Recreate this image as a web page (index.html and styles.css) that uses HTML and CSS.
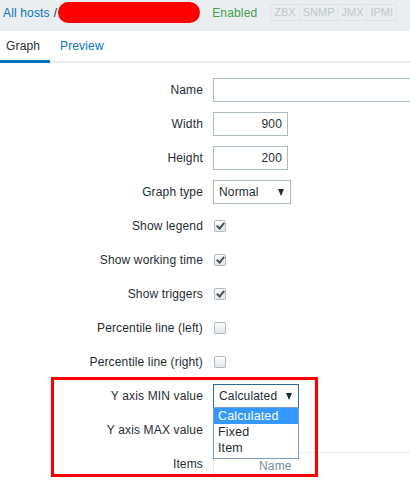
FILE: index.html
```html
<!DOCTYPE html>
<html lang="en">
<head>
  <meta charset="UTF-8" />
  <title>Graph</title>
  <link rel="stylesheet" href="styles.css">
</head>
<body>
  <header class="host-bar">
    <a class="link" href="#">All hosts</a>
    <span class="sep">/</span>
    <span class="host-name"></span>
    <span class="status-ok">Enabled</span>
    <span class="avail">
      <span class="tag">ZBX</span><span class="tag">SNMP</span><span class="tag">JMX</span><span class="tag">IPMI</span>
    </span>
  </header>

  <nav class="tabs">
    <span class="tab active">Graph</span>
    <a class="tab link" href="#">Preview</a>
  </nav>

  <form class="form-list">
    <div class="row">
      <label>Name</label>
      <input class="text wide" type="text">
    </div>
    <div class="row">
      <label>Width</label>
      <input class="text num" type="text" value="900">
    </div>
    <div class="row">
      <label>Height</label>
      <input class="text num" type="text" value="200">
    </div>
    <div class="row">
      <label>Graph type</label>
      <div class="select type-select"><span>Normal</span><i class="arrow"></i></div>
    </div>
    <div class="row">
      <label>Show legend</label>
      <span class="check on"></span>
    </div>
    <div class="row">
      <label>Show working time</label>
      <span class="check on"></span>
    </div>
    <div class="row">
      <label>Show triggers</label>
      <span class="check on"></span>
    </div>
    <div class="row">
      <label>Percentile line (left)</label>
      <span class="check"></span>
    </div>
    <div class="row">
      <label>Percentile line (right)</label>
      <span class="check"></span>
    </div>
    <div class="row">
      <label>Y axis MIN value</label>
      <div class="select-wrap">
        <div class="select focused"><span>Calculated</span><i class="arrow"></i></div>
        <ul class="options">
          <li class="picked">Calculated</li>
          <li>Fixed</li>
          <li>Item</li>
        </ul>
      </div>
    </div>
    <div class="row">
      <label>Y axis MAX value</label>
      <span></span>
    </div>
    <div class="row">
      <label>Items</label>
      <div class="items-table">
        <span class="th">Name</span>
      </div>
    </div>
  </form>

  <div class="callout"></div>
</body>
</html>
```

FILE: styles.css
```css
body {
  margin: 0;
  font-family: "Liberation Sans", Arial, sans-serif;
  font-size: 12px;
  letter-spacing: 0.15px;
  color: #1f2c33;
  background: #fff;
  overflow: hidden;
  position: relative;
  height: 480px;
}

.link {
  color: #0275b8;
  text-decoration: none;
}

/* host header */
.host-bar {
  display: flex;
  align-items: center;
  height: 21px;
  padding: 2px 0 8px 3px;
  background: #ebeef0;
}

.sep {
  margin-left: 4px;
  color: #1f2c33;
}

.host-name {
  width: 142px;
  height: 21px;
  margin-left: 1px;
  border-radius: 11px;
  background: #ff0000;
}

.status-ok {
  margin-left: 12px;
  color: #429e47;
}

.avail {
  display: flex;
  margin-left: 13px;
  border: 1px solid #dfe4e7;
  border-radius: 2px;
}

.tag {
  padding: 1px 3px;
  font-size: 11px;
  line-height: 13px;
  letter-spacing: 0;
  color: #bcc6cb;
  border-left: 1px solid #dfe4e7;
}

.tag:first-child {
  border-left: none;
}

/* tabs */
.tabs {
  display: flex;
  height: 30px;
  border-bottom: 2px solid #ebeef0;
}

.tab {
  padding: 0 6px;
  line-height: 31px;
}

.tab.active {
  width: 38px;
  border-bottom: 3px solid #0275b8;
  margin-bottom: -2px;
}

.tab.link {
  padding-left: 10px;
}

/* form */
.form-list {
  padding-top: 15px;
}

.row {
  display: grid;
  grid-template-columns: 203px 1fr;
  column-gap: 10px;
  align-items: center;
  min-height: 24px;
  margin-bottom: 10px;
}

.row label {
  text-align: right;
}

.text {
  box-sizing: border-box;
  height: 24px;
  padding: 0 5px;
  border: 1px solid #acbbc2;
  font-family: inherit;
  font-size: 12px;
  letter-spacing: 0.15px;
  color: #1f2c33;
  outline: none;
}

.text.wide {
  width: 197px;
  border-right: none;
}

.text.num {
  width: 75px;
  text-align: right;
}

.select {
  box-sizing: border-box;
  display: flex;
  align-items: center;
  justify-content: space-between;
  height: 24px;
  padding: 0 5px;
  border: 1px solid #acbbc2;
}

.type-select {
  width: 78px;
}

.arrow {
  width: 0;
  height: 0;
  border-left: 3.5px solid transparent;
  border-right: 3.5px solid transparent;
  border-top: 7px solid #1f2c33;
  margin-right: 1px;
}

.check {
  box-sizing: border-box;
  position: relative;
  width: 12px;
  height: 12px;
  margin-left: 1px;
  border: 1px solid #acbbc2;
  border-radius: 2px;
  background: linear-gradient(#fdfdfd, #e3e7ea);
}

.check.on::after {
  content: "";
  position: absolute;
  left: 3px;
  top: 0px;
  width: 3px;
  height: 6px;
  border-right: 2px solid #4a4f52;
  border-bottom: 2px solid #4a4f52;
  transform: rotate(40deg);
}

/* open dropdown */
.select-wrap {
  position: relative;
  width: 86px;
  z-index: 2;
}

.select.focused {
  border-color: #2b6a96;
}

.options {
  position: absolute;
  top: 23px;
  left: 0;
  width: 86px;
  box-sizing: border-box;
  margin: 0;
  padding: 0 0 2px;
  list-style: none;
  background: #fff;
  border: 1px solid #7a9cd3;
}

.options li {
  padding: 0 4px;
  font-size: 12.5px;
  line-height: 16px;
}

.options li.picked {
  background: #3399ff;
  color: #fff;
}

/* items table */
.items-table {
  height: 30px;
  margin-bottom: -6px;
  border-top: 1px solid #e4e9eb;
  border-left: 1px solid #e4e9eb;
  padding: 6px 0 0 45px;
  box-sizing: border-box;
}

.th {
  color: #768d99;
}

/* highlight frame */
.callout {
  position: absolute;
  left: 51px;
  top: 377px;
  width: 261px;
  height: 94px;
  border: 3px solid #ff0000;
}
```
